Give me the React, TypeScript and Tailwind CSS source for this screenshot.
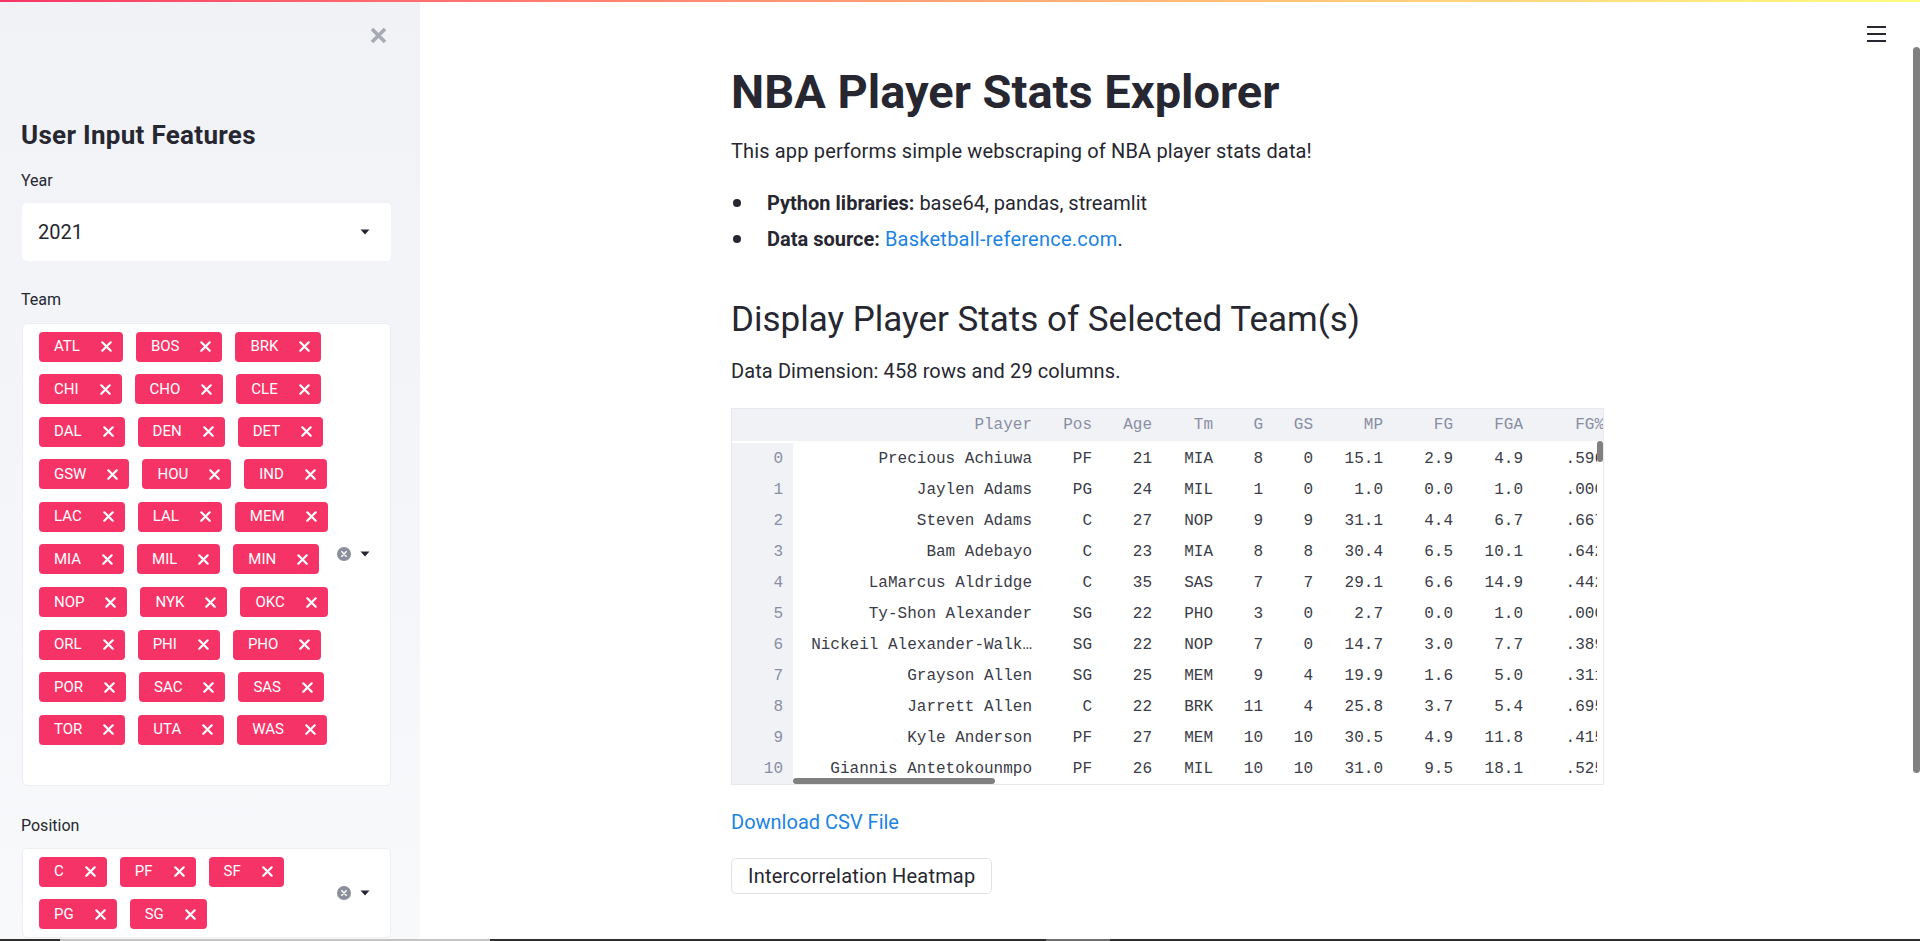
import type { ReactNode } from 'react';

const SANS = 'font-["Roboto","Liberation_Sans",sans-serif]';

const TEAM_ROWS = [
  ['ATL', 'BOS', 'BRK'],
  ['CHI', 'CHO', 'CLE'],
  ['DAL', 'DEN', 'DET'],
  ['GSW', 'HOU', 'IND'],
  ['LAC', 'LAL', 'MEM'],
  ['MIA', 'MIL', 'MIN'],
  ['NOP', 'NYK', 'OKC'],
  ['ORL', 'PHI', 'PHO'],
  ['POR', 'SAC', 'SAS'],
  ['TOR', 'UTA', 'WAS'],
];

const POSITION_ROWS = [
  ['C', 'PF', 'SF'],
  ['PG', 'SG'],
];

const COLUMNS = [
  { key: 'Player', width: 'w-[249px]' },
  { key: 'Pos', width: 'w-[60px]' },
  { key: 'Age', width: 'w-[60px]' },
  { key: 'Tm', width: 'w-[61px]' },
  { key: 'G', width: 'w-[50px]' },
  { key: 'GS', width: 'w-[50px]' },
  { key: 'MP', width: 'w-[70px]' },
  { key: 'FG', width: 'w-[70px]' },
  { key: 'FGA', width: 'w-[70px]' },
  { key: 'FG%', width: 'w-[81px]' },
];

const PLAYERS: string[][] = [
  ['Precious Achiuwa', 'PF', '21', 'MIA', '8', '0', '15.1', '2.9', '4.9', '.596'],
  ['Jaylen Adams', 'PG', '24', 'MIL', '1', '0', '1.0', '0.0', '1.0', '.000'],
  ['Steven Adams', 'C', '27', 'NOP', '9', '9', '31.1', '4.4', '6.7', '.667'],
  ['Bam Adebayo', 'C', '23', 'MIA', '8', '8', '30.4', '6.5', '10.1', '.642'],
  ['LaMarcus Aldridge', 'C', '35', 'SAS', '7', '7', '29.1', '6.6', '14.9', '.442'],
  ['Ty-Shon Alexander', 'SG', '22', 'PHO', '3', '0', '2.7', '0.0', '1.0', '.000'],
  ['Nickeil Alexander-Walk…', 'SG', '22', 'NOP', '7', '0', '14.7', '3.0', '7.7', '.389'],
  ['Grayson Allen', 'SG', '25', 'MEM', '9', '4', '19.9', '1.6', '5.0', '.311'],
  ['Jarrett Allen', 'C', '22', 'BRK', '11', '4', '25.8', '3.7', '5.4', '.695'],
  ['Kyle Anderson', 'PF', '27', 'MEM', '10', '10', '30.5', '4.9', '11.8', '.415'],
  ['Giannis Antetokounmpo', 'PF', '26', 'MIL', '10', '10', '31.0', '9.5', '18.1', '.525'],
];

function Caret() {
  return (
    <svg width="10" height="6" viewBox="0 0 10 6" aria-hidden="true">
      <path d="M0.5 0.5H9.5L5 5.5Z" fill="#262730" />
    </svg>
  );
}

function ClearIcon() {
  return (
    <svg width="14" height="14" viewBox="0 0 14 14" aria-hidden="true">
      <circle cx="7" cy="7" r="7" fill="#8b8e9b" />
      <path d="M4.8 4.8L9.2 9.2M9.2 4.8L4.8 9.2" stroke="white" strokeWidth="1.6" strokeLinecap="round" />
    </svg>
  );
}

function Tag({ label }: { label: string }) {
  return (
    <span className="flex h-[30px] items-center rounded-[4px] bg-[#f63366] pl-[15px] pr-[11px] text-[15px] leading-none text-white">
      <span>{label}</span>
      <svg className="ml-[21px]" width="11" height="11" viewBox="0 0 11 11" aria-hidden="true">
        <path d="M1.3 1.3L9.7 9.7M9.7 1.3L1.3 9.7" stroke="white" strokeWidth="2.2" strokeLinecap="round" />
      </svg>
    </span>
  );
}

function MultiSelect({ rows, bottom }: { rows: string[][]; bottom: string }) {
  return (
    <div className="ml-[1px] flex w-[369px] rounded-[5px] border border-[#eceef2] bg-white pl-[16px] pr-[20px]">
      <div className={`flex flex-1 flex-col gap-y-[12.6px] pt-[8px] ${bottom}`}>
        {rows.map((row, i) => (
          <div key={i} className="flex gap-[13px]">
            {row.map((t) => (
              <Tag key={t} label={t} />
            ))}
          </div>
        ))}
      </div>
      <div className="flex items-center gap-[9px]">
        <ClearIcon />
        <Caret />
      </div>
    </div>
  );
}

function Label({ children, className = '' }: { children: ReactNode; className?: string }) {
  return <div className={`text-[16px] leading-[20px] text-[#262730] ${className}`}>{children}</div>;
}

function Sidebar() {
  return (
    <aside className="h-full w-[420px] shrink-0 overflow-hidden bg-gradient-to-b from-[#f0f2f6] to-[#f8f9fb] px-[21px]">
      <div className="flex justify-end pr-[11px] pt-[24px]">
        <svg width="19" height="19" viewBox="0 0 19 19" aria-hidden="true">
          <path d="M3 3L16 16M16 3L3 16" stroke="#a7aab2" strokeWidth="3.6" />
        </svg>
      </div>
      <h2 className="mt-[74px] text-[26px] font-bold leading-[32px] tracking-[0.3px] text-[#262730]">
        User Input Features
      </h2>
      <Label className="mt-[20px]">Year</Label>
      <div className="ml-[1px] mt-[11.5px] flex h-[58px] w-[369px] items-center justify-between rounded-[5px] bg-white pl-[16px] pr-[21px]">
        <span className="text-[20px] text-[#262730]">2021</span>
        <Caret />
      </div>
      <Label className="mt-[29.5px]">Team</Label>
      <div className="mt-[12.5px]">
        <MultiSelect rows={TEAM_ROWS} bottom="pb-[40px]" />
      </div>
      <Label className="mt-[30.5px]">Position</Label>
      <div className="mt-[11.5px]">
        <MultiSelect rows={POSITION_ROWS} bottom="pb-[8px]" />
      </div>
    </aside>
  );
}

function StatsTable() {
  const mono = 'font-["Liberation_Mono","DejaVu_Sans_Mono",monospace] text-[16px]';
  return (
    <div className={`relative h-[377px] w-[873px] overflow-hidden border border-[#e6e9ef] ${mono}`}>
      <div className="flex h-[32px] items-center whitespace-nowrap bg-[#f0f2f6] text-[#8a8ea3]">
        <div className="w-[61px] shrink-0" />
        {COLUMNS.map((c) => (
          <div key={c.key} className={`${c.width} shrink-0 pr-[10px] text-right`}>
            {c.key}
          </div>
        ))}
      </div>
      <div className="w-[865px] overflow-hidden pt-[2px]">
        {PLAYERS.map((row, i) => (
          <div key={i} className="flex h-[31.1px] items-center whitespace-nowrap text-[#3a3c47]">
            <div className="flex h-full w-[61px] shrink-0 items-center justify-end bg-[#f0f2f6] pr-[10px] text-[#8a8ea3]">
              {i}
            </div>
            {row.map((v, j) => (
              <div key={j} className={`${COLUMNS[j].width} shrink-0 pr-[10px] text-right`}>
                {v}
              </div>
            ))}
          </div>
        ))}
      </div>
      <div className="absolute left-[61px] bottom-0 h-[6px] w-[202px] rounded-full bg-[#808080]" />
      <div className="absolute right-0 top-[32px] h-[21px] w-[6px] rounded-full bg-[#808080]" />
    </div>
  );
}

function Main() {
  return (
    <main className="relative h-full flex-1 overflow-hidden bg-white pr-[6px]">
      <div className="absolute right-[34px] top-[24px] flex flex-col gap-[5px]">
        <span className="h-[2px] w-[19px] bg-[#262730]" />
        <span className="h-[2px] w-[19px] bg-[#262730]" />
        <span className="h-[2px] w-[19px] bg-[#262730]" />
      </div>
      <div className="absolute right-0 top-[45px] h-[726px] w-[7px] rounded-[4px] bg-[#808080]" />
      <div className="mx-auto w-[872px] pt-[60px] text-[#262730]">
        <h1 className="text-[47px] font-bold leading-[60px]">NBA Player Stats Explorer</h1>
        <p className="mt-[14px] text-[20px] leading-[30px] tracking-[0.15px]">
          This app performs simple webscraping of NBA player stats data!
        </p>
        <ul className="mt-[22px] flex flex-col gap-[6px] text-[20px] leading-[30px]">
          <li className="flex items-center">
            <span className="ml-[2px] h-[8px] w-[8px] rounded-full bg-[#262730]" />
            <span className="ml-[26px]">
              <b className="font-bold">Python libraries:</b> base64, pandas, streamlit
            </span>
          </li>
          <li className="flex items-center">
            <span className="ml-[2px] h-[8px] w-[8px] rounded-full bg-[#262730]" />
            <span className="ml-[26px]">
              <b className="font-bold">Data source:</b>{' '}
              <a className="tracking-[0.25px] text-[#1c83e1]" href="#">
                Basketball-reference.com
              </a>
              .
            </span>
          </li>
        </ul>
        <h2 className="mt-[44px] text-[35px] font-normal leading-[44px]">Display Player Stats of Selected Team(s)</h2>
        <p className="mt-[14px] text-[20px] leading-[30px] tracking-[0.1px]">Data Dimension: 458 rows and 29 columns.</p>
        <div className="mt-[22px]">
          <StatsTable />
        </div>
        <a className="mt-[22px] block text-[20px] leading-[30px] text-[#1c83e1]" href="#">
          Download CSV File
        </a>
        <button
          type="button"
          className="mt-[21px] flex h-[36px] items-center rounded-[5px] border border-[#e0e2e8] bg-white px-[16px] text-[20px] tracking-[0.2px] text-[#262730]"
        >
          Intercorrelation Heatmap
        </button>
      </div>
    </main>
  );
}

export default function App() {
  return (
    <div className={`relative flex h-[941px] w-[1920px] flex-col overflow-hidden bg-white ${SANS}`}>
      <div className="h-[2px] w-full shrink-0 bg-gradient-to-r from-[#f63366] to-[#fffd80]" />
      <div className="flex min-h-0 flex-1">
        <Sidebar />
        <Main />
      </div>
      <div className="absolute bottom-0 left-0 flex h-[2px] w-full bg-[#2e2e2e]">
        <span className="ml-[60px] w-[430px] bg-[#c4c4c4]" />
        <span className="ml-[556px] w-[64px] bg-[#6e6e6e]" />
      </div>
    </div>
  );
}
